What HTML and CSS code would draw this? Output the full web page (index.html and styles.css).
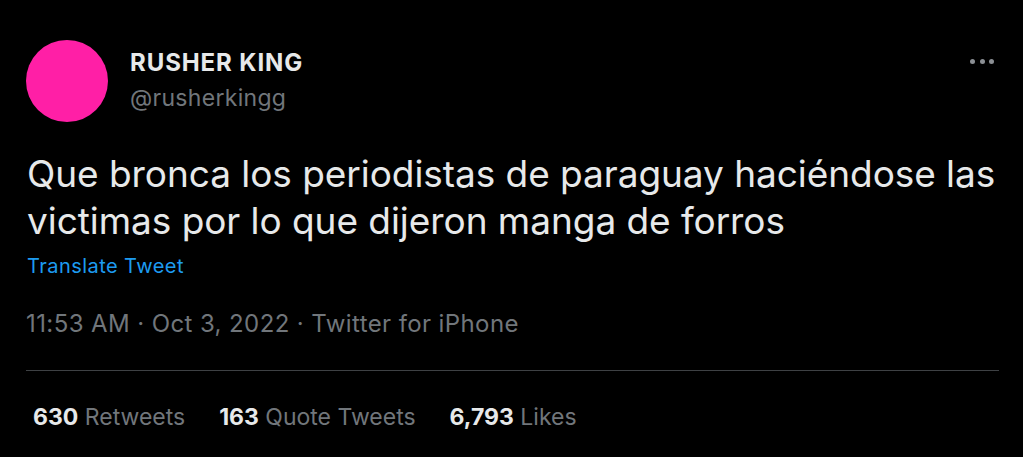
FILE: index.html
```html
<!DOCTYPE html>
<html lang="es">
<head>
<meta charset="utf-8">
<link rel="stylesheet" href="styles.css">
</head>
<body>
<article class="tweet">
  <header class="head">
    <div class="avatar"></div>
    <div class="names">
      <div class="name">RUSHER KING</div>
      <div class="handle">@rusherkingg</div>
    </div>
    <div class="more"><span></span><span></span><span></span></div>
  </header>
  <p class="text">Que bronca los periodistas de paraguay haciéndose las victimas por lo que dijeron manga de forros</p>
  <div class="translate">Translate Tweet</div>
  <div class="meta">11:53 AM · Oct 3, 2022 · Twitter for iPhone</div>
  <div class="divider"></div>
  <div class="stats">
    <span class="stat"><b>630</b> Retweets</span>
    <span class="stat"><b>163</b> Quote Tweets</span>
    <span class="stat"><b>6,793</b> Likes</span>
  </div>
</article>
</body>
</html>
```
FILE: styles.css
```css
html, body {
  margin: 0;
  padding: 0;
  background: #000;
}
body {
  width: 1023px;
  height: 457px;
  overflow: hidden;
  font-family: Inter, "Noto Sans", sans-serif;
  color: #e7e9ea;
}
.tweet {
  padding: 40px 24px 0 26px;
}
.head {
  display: flex;
  align-items: flex-start;
}
.avatar {
  width: 82px;
  height: 82px;
  border-radius: 50%;
  background: #ff1fa6;
  flex: none;
}
.names {
  margin-left: 22px;
  margin-top: 8px;
  flex: 1;
}
.name {
  font-size: 24px;
  font-weight: 700;
  line-height: 30px;
  letter-spacing: 0.9px;
  color: #e7e9ea;
}
.handle {
  font-size: 23px;
  line-height: 30px;
  letter-spacing: 0.3px;
  color: #71767b;
  margin-top: 5px;
}
.more {
  display: flex;
  gap: 4.5px;
  margin-top: 19px;
  margin-right: 5px;
}
.more span {
  width: 5px;
  height: 5px;
  border-radius: 50%;
  background: #8b8f94;
}
.text {
  margin: 28px 0 0 1px;
  font-size: 37px;
  line-height: 47px;
  letter-spacing: -0.05px;
  color: #e7e9ea;
}
.translate {
  margin: 10px 0 0 1px;
  font-size: 20px;
  line-height: 24px;
  letter-spacing: 0.45px;
  color: #1d9bf0;
}
.meta {
  margin: 31px 0 0 0;
  font-size: 24px;
  line-height: 30px;
  letter-spacing: 0.4px;
  color: #71767b;
}
.divider {
  margin: 31px 0 0 0;
  height: 1px;
  background: #3e4144;
}
.stats {
  display: flex;
  gap: 34px;
  margin: 31px 0 0 7px;
  font-size: 23px;
  line-height: 30px;
  color: #71767b;
}
.stat b {
  color: #e7e9ea;
  font-weight: 700;
}
```
